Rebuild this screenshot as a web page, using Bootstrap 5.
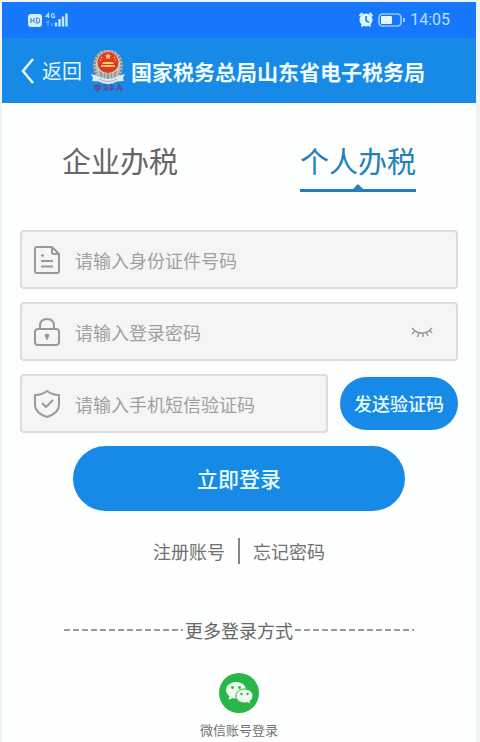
<!DOCTYPE html>
<html lang="zh-CN">
<head>
<meta charset="utf-8">
<meta name="viewport" content="width=device-width, initial-scale=1">
<title>国家税务总局山东省电子税务局</title>
<link href="https://cdn.jsdelivr.net/npm/bootstrap@5.3.0/dist/css/bootstrap.min.css" rel="stylesheet">
<style>
  body { font-family: "Noto Sans CJK SC", sans-serif; background: #fdfefe; color: #666; }
  .phone { border: solid #f1f4f4; border-width: 2px 4px 0 2px; background: #fdfefe; }
  .status { background: #1677fd; height: 36px; padding: 0 26px; color: #b5e2ff; font: 16px/36px Roboto, sans-serif; }
  .topbar { background: #168ae6; height: 65px; padding: 0 16px 0 18px; color: #f0fcff; }
  .back { font-size: 20px; line-height: 30px; color: #e4f7ff; }
  .site-title { font-size: 21px; line-height: 30px; font-weight: 700; margin-left: 5px; }
  .tabs { padding: 36px 60px 0; }
  .tab-btn { font-size: 29px; height: 53px; color: #666; border: 0; border-bottom: 3px solid transparent; border-radius: 0; }
  .tab-btn span { display: block; line-height: 42px; height: 50px; }
  .tab-btn.active, .tab-btn:hover { color: #2380b8; }
  .tab-btn.active { border-bottom-color: #2380b8; }
  .tab-btn.active::after { content: ""; position: absolute; left: 50%; bottom: 0; margin-left: -5px; border: 5px solid transparent; border-top: 0; border-bottom-color: #2380b8; }
  .login-form { padding: 38px 18px 0; gap: 13px; }
  .field { height: 59px; border: 2px solid #dcdcdc; border-radius: 4px; background: #f5f5f5; padding: 0 22px 0 11px; gap: 14px; color: #999; }
  .field .form-control { font-size: 18px; line-height: 28px; color: #555; min-width: 0; }
  .field .form-control::placeholder { color: #a0a0a0; opacity: 1; }
  .pill { background: #168ae6; color: #e8fcff; border: 0; font-weight: 500; }
  .pill:hover { background: #0f7bd0; color: #fff; }
  .send { width: 118px; height: 53px; font-size: 18px; }
  .submit { width: 76%; height: 65px; font-size: 21px; }
  .links { padding-top: 26px; gap: 13px; font-size: 18px; line-height: 28px; }
  .links a { color: #707070; }
  .divider { width: 2px; height: 26px; background: #858585; }
  .more { padding: 51px 62px 0; font-size: 18px; line-height: 28px; gap: 2px; }
  .dashes { height: 2px; background: repeating-linear-gradient(90deg, #999 0 6px, transparent 6px 9px); }
  .wechat { margin-top: 29px; font-size: 13px; line-height: 18px; gap: 8px; color: #707070; }
  svg { flex: none; }
</style>
<script src="https://cdn.jsdelivr.net/npm/bootstrap@5.3.0/dist/js/bootstrap.bundle.min.js"></script>
</head>
<body>
<div class="phone min-vh-100">
  <div class="status d-flex align-items-center justify-content-between">
    <svg width="42" height="16" viewBox="0 0 42 16" aria-hidden="true">
      <rect x="0" y="2" width="14" height="13" rx="3" fill="#d3f0ff"/>
      <path d="M3 6v5M6 6v5M3 8.500h3M8.500 6v5h1.200q2-.3 2-2.500t-2-2.500z" fill="none" stroke="#438fdc" stroke-width="1.200"/>
      <path d="M20.500 6V1.500L18 4.500h3.500M26.500 2.500q-3-2-3 1t3 2V4h-1.200" fill="none" stroke="#b5e2ff" stroke-width="1.200"/>
      <path d="M20 9v5m-1.500-3.500L20 9l1.500 1.500M24 14v-3" fill="none" stroke="#55b4ff" stroke-width="1.200"/>
      <path d="M28 14.500v-4M31.500 14.500V7M35 14.500V4.500M38.500 14.500V1.500" stroke="#c0eaff" stroke-width="2.400"/>
    </svg>
    <div class="d-flex align-items-center">
      <svg width="48" height="18" viewBox="0 0 48 18" aria-hidden="true">
        <circle cx="8" cy="9" r="6.500" fill="#d8f5ff"/>
        <path d="M1.500 5l3-3M14.500 5l-3-3M3.500 15.500l1.500-2M12.500 15.500l-1.500-2" stroke="#d8f5ff" stroke-width="2"/>
        <path d="M8 5v4.500l3 2" fill="none" stroke="#1c6fd0" stroke-width="1.500"/>
        <rect x="21" y="3" width="22" height="12" rx="3.500" fill="none" stroke="#8fcaff" stroke-width="1.700"/>
        <rect x="23" y="5" width="11" height="8" rx="1" fill="#e1f8ff"/>
        <path d="M46 7v4" stroke="#8fcaff" stroke-width="2"/>
      </svg>
      <span class="ms-1">14:05</span>
    </div>
  </div>

  <header class="topbar d-flex align-items-center">
    <a href="#" class="back d-flex align-items-center text-decoration-none text-nowrap">
      <svg class="me-2" width="14" height="28" viewBox="0 0 14 28" aria-hidden="true"><path d="M13 2L3 14l10 12" fill="none" stroke="#e9faff" stroke-width="2.500"/></svg>返回
    </a>
    <svg class="ms-2" width="36" height="46" viewBox="0 0 36 46" role="img" aria-label="中国税务">
      <path d="M8 31C-1 20 3 2 18 2s19 18 10 29z" fill="#b9c2c8"/>
      <path d="M8 29C0 19 5 4 18 4s18 15 10 25" fill="none" stroke="#7b8794" stroke-width="3" stroke-dasharray="2 1.500"/>
      <circle cx="18" cy="15" r="11.500" fill="#e9c8a8"/>
      <circle cx="18" cy="14.500" r="10.500" fill="#dd3a24"/>
      <path d="M18 5l1 2.300 2.400.1-1.900 1.500.7 2.300-2.200-1.300-2.200 1.300.7-2.300-1.900-1.500 2.400-.1zM11 17h14v2H11zM13 14h10l1 2H12z" fill="#ffc66c"/>
      <path d="M11 9l1 1M24 10l1-1M10 12h1M25 12h1" stroke="#ffc66c" stroke-width="1.500"/>
      <path d="M9 23q9 5 18 0l-2 7q-7 4-14 0z" fill="#8d989e"/>
      <path d="M13 24v6M16 25v6M20 25v6M23 24v6" stroke="#d7dddd"/>
      <path d="M1 26l7 2q10 6 20 0l7-2-2 4 1 3-7 .5q-9 5-18 0L2 33l1-3z" fill="#dcebf0"/>
      <path d="M9 31q9 5 18 0" fill="none" stroke="#9eb4c1"/>
      <path d="M5 38h5v3H5zM7.500 36v8M13 38h4M15 36v3M13 42l4-2v3M20 38h4M21 36v7M20 42l4-2M27 38h4M29 36l-2 7M28 40h3v3" fill="none" stroke="#62488f" stroke-width="1.600"/>
    </svg>
    <h1 class="site-title mb-0 text-nowrap">国家税务总局山东省电子税务局</h1>
  </header>

  <main>
    <div class="tabs d-flex justify-content-between" role="tablist">
      <button type="button" class="btn tab-btn p-0" role="tab" aria-selected="false"><span>企业办税</span></button>
      <button type="button" class="btn tab-btn p-0 active position-relative" role="tab" aria-selected="true"><span>个人办税</span></button>
    </div>

    <form class="login-form d-flex flex-column">
      <div class="field d-flex align-items-center">
        <label for="idno" class="d-flex" aria-label="身份证件号码">
          <svg width="28" height="30" viewBox="0 0 28 30" fill="none" stroke="#999" stroke-width="2" stroke-linejoin="round"><path d="M4 2h15l7 7v17q0 2-2 2H4q-2 0-2-2V4q0-2 2-2z"/><path d="M19 2v5q0 2 2 2h5M8 10.500h3M8 16h12M8 21.500h12"/></svg>
        </label>
        <input id="idno" type="text" class="form-control border-0 bg-transparent p-0 shadow-none" placeholder="请输入身份证件号码">
      </div>
      <div class="field d-flex align-items-center">
        <label for="pwd" class="d-flex" aria-label="登录密码">
          <svg width="28" height="30" viewBox="0 0 28 30" fill="none" stroke="#999" stroke-width="2"><rect x="2" y="12" width="24" height="16" rx="3"/><path d="M7 12V9q0-7 7-7t7 7v3"/><path d="M12 18q2-2 4 0l-2 5z" fill="#999" stroke-width="1"/></svg>
        </label>
        <input id="pwd" type="password" class="form-control border-0 bg-transparent p-0 shadow-none" placeholder="请输入登录密码">
        <button type="button" class="btn p-0 border-0 d-flex" aria-label="显示密码">
          <svg width="24" height="14" viewBox="0 0 24 14" fill="none" stroke="#999" stroke-width="1.500"><path d="M2 3q4 5 10 5t10-5M5 6l-3 3M9 8l-1.500 4M13 8v4M16 7l2 4M19 5l3 3"/></svg>
        </button>
      </div>
      <div class="d-flex align-items-center">
        <div class="field d-flex align-items-center flex-grow-1 me-1">
          <label for="sms" class="d-flex" aria-label="手机短信验证码">
            <svg width="28" height="30" viewBox="0 0 28 30" fill="none" stroke="#999" stroke-width="2" stroke-linejoin="round"><path d="M14 2q5 4 12 4v10q0 8-12 12Q2 24 2 16V6q7 0 12-4z"/><path d="M9 14l4 4 7-7"/></svg>
          </label>
          <input id="sms" type="text" class="form-control border-0 bg-transparent p-0 shadow-none" placeholder="请输入手机短信验证码">
        </div>
        <button type="button" class="btn pill send rounded-pill p-0 ms-2 flex-shrink-0">发送验证码</button>
      </div>
      <button type="submit" class="btn pill submit rounded-pill align-self-center p-0">立即登录</button>
    </form>

    <nav class="links d-flex justify-content-center align-items-center">
      <a href="#" class="text-decoration-none">注册账号</a>
      <span class="divider"></span>
      <a href="#" class="text-decoration-none">忘记密码</a>
    </nav>

    <div class="more d-flex align-items-center">
      <span class="dashes flex-fill"></span><span>更多登录方式</span><span class="dashes flex-fill"></span>
    </div>

    <a href="#" class="wechat d-flex flex-column align-items-center text-decoration-none">
      <svg width="40" height="40" viewBox="0 0 40 40" aria-hidden="true">
        <circle cx="20" cy="20" r="20" fill="#29b548"/>
        <path d="M17 9c-6 0-10 3.700-10 8 0 2.600 1.400 4.700 3.500 6.200L9.500 27l4-2q1.700.5 3.500.5c6 0 10-3.800 10-8.500S23 9 17 9z" fill="#eefbed"/>
        <path d="M25.500 16c-5 0-8.500 3.200-8.500 7s3.500 7 8.500 7q1.500 0 3-.5l3.500 2-1-3.200q3-2 3-5.300c0-3.800-3.500-7-8.500-7z" fill="#eefbed" stroke="#29b548"/>
        <g fill="#29b548"><circle cx="13.500" cy="14.500" r="1.400"/><circle cx="20.500" cy="14.500" r="1.400"/><circle cx="22.500" cy="21" r="1.200"/><circle cx="28.500" cy="21" r="1.200"/></g>
      </svg>
      <span>微信账号登录</span>
    </a>
  </main>
</div>
</body>
</html>
